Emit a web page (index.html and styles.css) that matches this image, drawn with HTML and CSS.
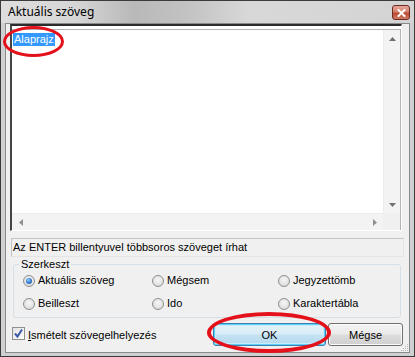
FILE: index.html
```html
<!DOCTYPE html>
<html lang="hu">
<head>
<meta charset="utf-8">
<title>Aktuális szöveg</title>
<link rel="stylesheet" href="styles.css">
</head>
<body>
<div class="window">
  <div class="titlebar">
    <span class="title">Aktuális szöveg</span>
    <span class="close"><svg width="9" height="8" viewBox="0 0 9 8"><path d="M1.5 1 L7.5 7 M7.5 1 L1.5 7" stroke="#fff" stroke-width="2" stroke-linecap="square"/></svg></span>
  </div>
  <div class="client">
    <div class="editor">
      <div class="edit-inner">
        <div class="edit-main">
          <div class="text-area"><span class="sel">Alaprajz</span></div>
          <div class="vscroll">
            <span class="sbtn"><svg width="7" height="4" viewBox="0 0 7 4"><polygon points="0,4 3.5,0 7,4" fill="#707070"/></svg></span>
            <span class="sbtn"><svg width="7" height="4" viewBox="0 0 7 4"><polygon points="0,0 3.5,4 7,0" fill="#707070"/></svg></span>
          </div>
        </div>
        <div class="hscroll-row">
          <div class="hscroll">
            <span class="sbtn"><svg width="4" height="7" viewBox="0 0 4 7"><polygon points="4,0 0,3.5 4,7" fill="#909090"/></svg></span>
            <span class="sbtn"><svg width="4" height="7" viewBox="0 0 4 7"><polygon points="0,0 4,3.5 0,7" fill="#909090"/></svg></span>
          </div>
          <div class="corner"></div>
        </div>
      </div>
    </div>
    <div class="status">Az ENTER billentyuvel többsoros szöveget írhat</div>
    <fieldset class="group">
      <legend>Szerkeszt</legend>
      <div class="options">
        <label class="opt"><span class="radio checked"></span>Aktuális szöveg</label>
        <label class="opt"><span class="radio"></span>Mégsem</label>
        <label class="opt"><span class="radio"></span>Jegyzettömb</label>
        <label class="opt"><span class="radio"></span>Beilleszt</label>
        <label class="opt"><span class="radio"></span>Ido</label>
        <label class="opt"><span class="radio"></span>Karaktertábla</label>
      </div>
    </fieldset>
    <div class="footer">
      <label class="check">
        <span class="box"><svg width="11" height="11" viewBox="0 0 11 11"><path d="M2 5.5 L4.5 8.5 L9 1.5" fill="none" stroke="#3b5aa6" stroke-width="2"/></svg></span>
        <span><u>I</u>smételt szövegelhelyezés</span>
      </label>
      <div class="buttons">
        <button class="btn btn-default">OK</button>
        <button class="btn btn-cancel">Mégse</button>
      </div>
    </div>
    <span class="grip"><svg width="10" height="10" viewBox="0 0 10 10"><g fill="#b8b8b8"><rect x="8" y="2" width="1" height="1"/><rect x="6" y="4" width="1" height="1"/><rect x="8" y="4" width="1" height="1"/><rect x="4" y="6" width="1" height="1"/><rect x="6" y="6" width="1" height="1"/><rect x="8" y="6" width="1" height="1"/><rect x="2" y="8" width="1" height="1"/><rect x="4" y="8" width="1" height="1"/><rect x="6" y="8" width="1" height="1"/><rect x="8" y="8" width="1" height="1"/></g></svg></span>
  </div>
  <span class="mark mark-text"></span>
  <span class="mark mark-ok"></span>
</div>
</body>
</html>
```
FILE: styles.css
```css
* { box-sizing: border-box; }
body {
  margin: 0;
  font-family: "Liberation Sans", Arial, sans-serif;
  font-size: 11px;
  color: #000;
}
.window {
  position: relative;
  width: 415px;
  height: 357px;
  border: 1px solid #3b3b3b;
  background: #cfd0d2;
  padding: 0 4px 3px 4px;
  display: flex;
  flex-direction: column;
}
.titlebar {
  height: 22px;
  display: flex;
  align-items: flex-start;
  justify-content: space-between;
  padding-left: 3px;
  margin: 0 -4px;
  padding-right: 4px;
  background: linear-gradient(90deg, #dedede 0%, #d6d6d6 18%, #b9b9b9 32%, #c2c2c2 45%, #d8d8d8 60%, #d4d4d4 100%);
}
.title {
  font-family: "Noto Sans", "Liberation Sans", sans-serif;
  font-size: 12px;
  line-height: 16px;
  margin-top: 3px;
  margin-left: 4px;
  color: #000;
}
.close {
  width: 18px;
  height: 15px;
  margin-top: 4px;
  border: 1px solid #6d2a20;
  border-radius: 3px;
  background: linear-gradient(#e6a99c 0%, #d4806e 45%, #bd4a33 55%, #cf7b62 100%);
  display: flex;
  align-items: center;
  justify-content: center;
}
.client {
  flex: 1;
  position: relative;
  background: #f0f0f0;
  border: 1px solid #8a8a8a;
  padding: 0 7px 0 4px;
  display: flex;
  flex-direction: column;
}
.editor {
  height: 207px;
  border-top: 2px solid #2c2c2c;
  border-left: 2px solid #444;
  border-right: 1px solid #fff;
  border-bottom: 1px solid #fff;
  background: #fff;
  padding-top: 3px;
  display: flex;
  flex-direction: column;
}
.edit-inner {
  flex: 1;
  border-top: 1px solid #b4b4b4;
  border-right: 1px solid #b4b4b4;
  display: flex;
  flex-direction: column;
}
.edit-main {
  flex: 1;
  display: flex;
}
.text-area {
  flex: 1;
  padding: 3px 0 0 1px;
}
.sel {
  display: inline-block;
  height: 13px;
  line-height: 13px;
  padding: 0 1px;
  background: #3399ff;
  color: #fff;
}
.vscroll {
  width: 17px;
  background: #f3f3f3;
  border-left: 1px solid #ececec;
  display: flex;
  flex-direction: column;
  justify-content: space-between;
}
.sbtn {
  width: 17px;
  height: 17px;
  display: flex;
  align-items: center;
  justify-content: center;
}
.hscroll-row {
  height: 17px;
  display: flex;
}
.hscroll {
  flex: 1;
  display: flex;
  justify-content: space-between;
  background: #f3f3f3;
  border-top: 1px solid #ececec;
}
.corner {
  width: 17px;
  background: #f0f0f0;
}
.status {
  margin: 7px -2px 0 1px;
  height: 19px;
  border: 1px solid #c4c4c4;
  border-right-color: #e4e4e4;
  border-bottom-color: #e4e4e4;
  padding-left: 1px;
  line-height: 17px;
}
.group {
  margin: 1px 1px 0 3px;
  border: 1px solid #d5dfe5;
  border-radius: 3px;
  padding: 0 0 7px 5px;
  min-width: 0;
}
.group legend {
  padding: 0 2px;
  line-height: 13px;
}
.options {
  margin: 3px 0 0 4px;
  display: grid;
  grid-template-columns: 129px 126px 1fr;
  row-gap: 10px;
}
.opt {
  display: flex;
  align-items: center;
  gap: 3px;
  height: 13px;
  line-height: 13px;
}
.radio {
  width: 12px;
  height: 12px;
  border-radius: 50%;
  border: 1px solid #8e8f8f;
  background: radial-gradient(circle at 50% 40%, #f6f6f6 0, #e6e6e6 50%, #d2d2d2 100%);
  display: flex;
  align-items: center;
  justify-content: center;
}
.radio.checked::after {
  content: "";
  width: 6px;
  height: 6px;
  border-radius: 50%;
  background: radial-gradient(circle at 40% 35%, #9ed4ff 0, #3a83d6 45%, #1b4f9c 100%);
}
.footer {
  margin: 5px -1px 0 2px;
  height: 23px;
  display: flex;
  align-items: center;
  justify-content: space-between;
}
.check {
  display: flex;
  align-items: center;
  gap: 3px;
}
.box {
  width: 13px;
  height: 13px;
  border: 1px solid #8e8f8f;
  background: linear-gradient(135deg, #e3e3e3, #fdfdfd);
  display: flex;
  align-items: center;
  justify-content: center;
  margin-top: -2px;
}
.buttons {
  display: flex;
  gap: 2px;
}
.btn {
  font: inherit;
  height: 23px;
  padding: 0;
  color: #000;
  border: 1px solid #707070;
  border-radius: 3px;
  background: linear-gradient(#f2f2f2 0%, #ebebeb 48%, #dddddd 52%, #cfcfcf 100%);
  box-shadow: inset 0 0 0 1px #fbfbfb;
}
.btn-default {
  width: 113px;
  border-color: #3c7fb1;
  background: linear-gradient(#e6f2f9 0%, #d8ecf7 48%, #c4e2f2 52%, #b5d9ee 100%);
  box-shadow: inset 0 0 0 1px #5fd0f5, inset 0 0 0 2px #c9ecfb;
}
.btn-cancel {
  width: 75px;
}
.grip {
  position: absolute;
  right: 0;
  bottom: 0;
  width: 10px;
  height: 10px;
}
.grip svg { display: block; }
.mark {
  position: absolute;
  border: 3px solid #e4111b;
  border-radius: 50%;
  pointer-events: none;
}
.mark-text {
  left: 2px;
  top: 25px;
  width: 61px;
  height: 31px;
}
.mark-ok {
  left: 206px;
  top: 311px;
  width: 124px;
  height: 41px;
  border-width: 4px;
}
```
